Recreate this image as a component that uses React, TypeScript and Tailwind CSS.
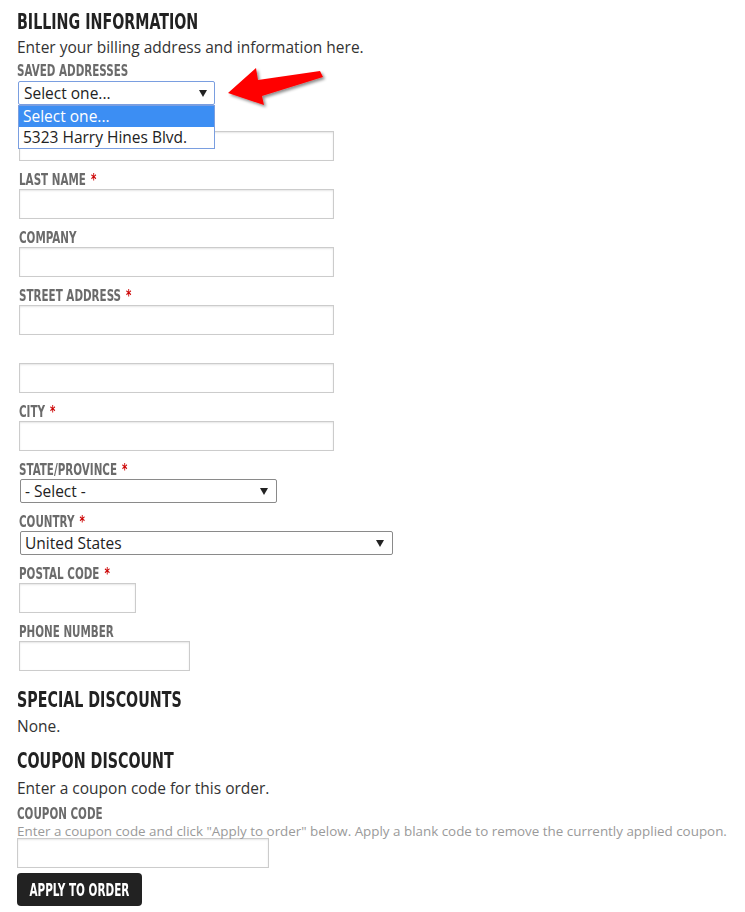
import React from "react";

const narrow = "font-['Liberation_Sans_Narrow','DejaVu_Sans_Condensed',sans-serif] font-bold";
const body = "font-['Open_Sans','Lato',sans-serif]";

function Caret() {
  return (
    <svg width="8" height="7" viewBox="0 0 8 7" className="shrink-0">
      <polygon points="0,0 8,0 4,7" fill="#222" />
    </svg>
  );
}

function Heading({ text, cls }: { text: string; cls: string }) {
  return (
    <h2 className={`${cls} h-[28px] leading-[28px] whitespace-nowrap`}>
      <span className={`${narrow} inline-block origin-left scale-x-[0.72] text-[22px] leading-[28px] text-[#222]`}>{text}</span>
    </h2>
  );
}

function Label({ text, req, cls = "pl-[2px]" }: { text: string; req?: boolean; cls?: string }) {
  return (
    <div className={`${cls} h-[20px] leading-[20px] whitespace-nowrap`}>
      <span className={`${narrow} inline-block origin-left scale-x-[0.72] text-[16px] leading-[20px] text-[#6b6b6b]`}>
        {text}
        {req && <span className="text-[#cc0000] ml-[7px]">*</span>}
      </span>
    </div>
  );
}

function Input({ w }: { w: string }) {
  return (
    <div className={`${w} h-[30px] ml-[2px] bg-white border border-[#cccccc] shadow-[inset_0_1px_2px_rgba(0,0,0,0.1)]`} />
  );
}

function Field({ label, req, w }: { label: string; req?: boolean; w: string }) {
  return (
    <div className="mb-[8px]">
      <Label text={label} req={req} />
      <Input w={w} />
    </div>
  );
}

function Select({ text, w }: { text: string; w: string }) {
  return (
    <div
      className={`${w} ${body} h-[24px] ml-[3px] flex items-center justify-between pl-[4px] pr-[8px] border border-[#8a8a8a] rounded-[2px] bg-white text-[15.5px] text-[#222]`}
    >
      <span className="leading-[20px]">{text}</span>
      <Caret />
    </div>
  );
}

export default function App() {
  return (
    <div className={`${body} bg-white w-[745px] min-h-[912px] px-[17px] pt-[8px] text-[#222]`}>
      <Heading text="BILLING INFORMATION" cls="" />
      <p className="mt-[1px] text-[15.5px] leading-[20px] text-[#333]">Enter your billing address and information here.</p>

      <Label text="SAVED ADDRESSES" cls="mt-[3px]" />

      <div className="relative mt-[1px]">
        <div className="w-[197px] h-[24px] ml-[1px] flex items-center justify-between pl-[5px] pr-[7px] border border-[#7a9ee0] rounded-[2px] bg-white text-[15.5px] text-[#222]">
          <span className="leading-[20px]">Select one...</span>
          <Caret />
        </div>
        <div className="absolute left-[1px] top-[24px] w-[197px] z-10 border border-[#7a9ee0] bg-white text-[15.5px] leading-[21px]">
          <div className="bg-[#3c8ef3] text-white pl-[4px] h-[21px]">Select one...</div>
          <div className="text-[#222] pl-[4px] h-[21px]">5323 Harry Hines Blvd.</div>
        </div>
        <svg className="absolute left-[193px] top-[-16px] z-10" width="140" height="50" viewBox="210 -16 140 50" style={{ overflow: "visible" }}>
          <defs>
            <filter id="sh" x="-20%" y="-40%" width="150%" height="200%">
              <feDropShadow dx="2" dy="2" stdDeviation="1.5" floodColor="#000" floodOpacity="0.45" />
            </filter>
          </defs>
          <polygon
            points="228,12 256,-13 258,-1 320,-10 323,-4 262,15 264,24"
            fill="#ff0000"
            filter="url(#sh)"
          />
        </svg>
      </div>

      <div className="mt-[6px]">
        <Field label="" w="w-[315px]" />
        <Field label="LAST NAME" req w="w-[315px]" />
        <Field label="COMPANY" w="w-[315px]" />
        <Field label="STREET ADDRESS" req w="w-[315px]" />
        <Field label="" w="w-[315px]" />
        <Field label="CITY" req w="w-[315px]" />
        <div className="mb-[8px]">
          <Label text="STATE/PROVINCE" req />
          <Select text="- Select -" w="w-[257px]" />
        </div>
        <div className="mb-[8px]">
          <Label text="COUNTRY" req />
          <Select text="United States" w="w-[373px]" />
        </div>
        <Field label="POSTAL CODE" req w="w-[117px]" />
        <Field label="PHONE NUMBER" w="w-[171px]" />
      </div>

      <Heading text="SPECIAL DISCOUNTS" cls="mt-[15px]" />
      <p className="mt-[2px] text-[15.5px] leading-[20px] text-[#333]">None.</p>

      <Heading text="COUPON DISCOUNT" cls="mt-[11px]" />
      <p className="mt-[3px] text-[15.5px] leading-[20px] text-[#333]">Enter a coupon code for this order.</p>
      <Label text="COUPON CODE" cls="mt-[5px]" />
      <p className="mt-[1px] text-[13.4px] leading-[15px] text-[#9a9a9a] whitespace-nowrap">
        Enter a coupon code and click "Apply to order" below. Apply a blank code to remove the currently applied coupon.
      </p>
      <div className="mt-[-1px] w-[252px] h-[30px] bg-white border border-[#cccccc] shadow-[inset_0_1px_2px_rgba(0,0,0,0.1)]" />
      <button className="mt-[5px] w-[125px] h-[33px] rounded-[4px] bg-[#222222] flex items-center justify-center overflow-visible">
        <span className={`${narrow} inline-block whitespace-nowrap origin-center scale-x-[0.645] text-white text-[18px] leading-[20px]`}>
          APPLY TO ORDER
        </span>
      </button>
    </div>
  );
}
